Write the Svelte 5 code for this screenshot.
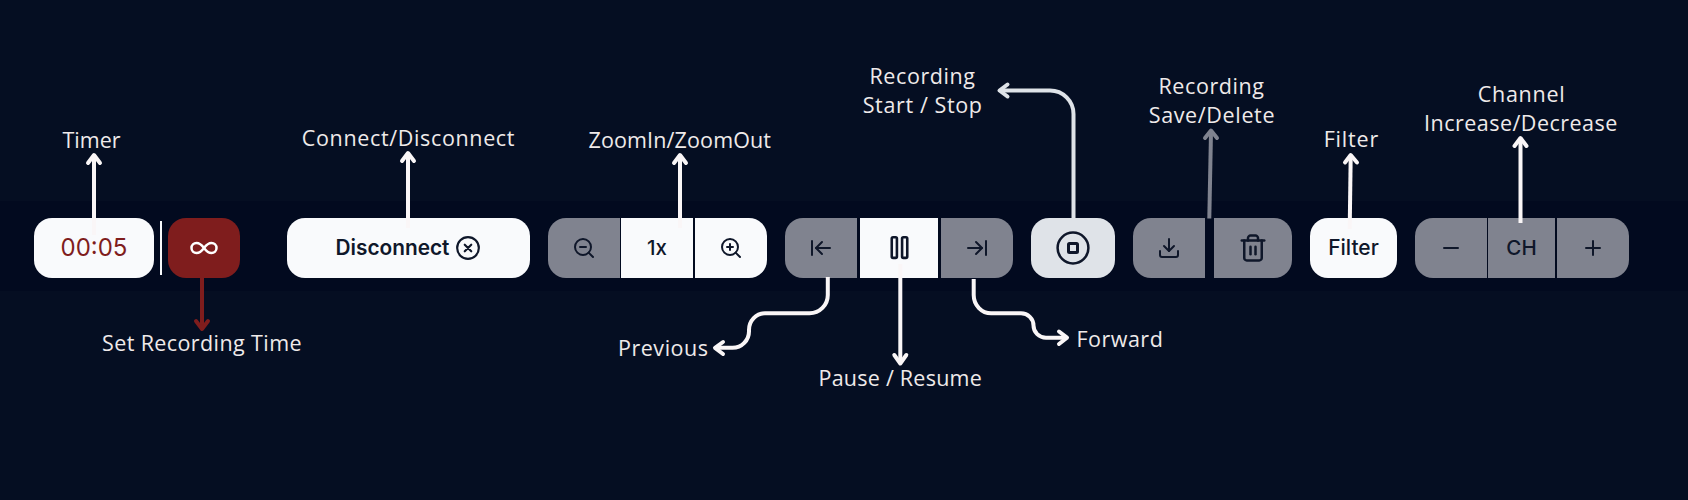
<script>
  const LIGHT = '#faf6f7';
  const labels = [
    { x: 62.5, w: 58, y: 148, t: 'Timer' },
    { x: 102, w: 199.5, y: 351, t: 'Set Recording Time' },
    { x: 301.8, w: 212.7, y: 146, t: 'Connect/Disconnect' },
    { x: 588.5, w: 182.5, y: 148, t: 'ZoomIn/ZoomOut' },
    { x: 618, w: 90, y: 355.5, t: 'Previous' },
    { x: 818.5, w: 163.3, y: 386, t: 'Pause / Resume' },
    { x: 869.5, w: 105.5, y: 84, t: 'Recording' },
    { x: 862.7, w: 119.3, y: 113, t: 'Start / Stop' },
    { x: 1076.5, w: 86.3, y: 346.5, t: 'Forward' },
    { x: 1158.5, w: 105.5, y: 94, t: 'Recording' },
    { x: 1148.7, w: 125.8, y: 123, t: 'Save/Delete' },
    { x: 1323.7, w: 54.5, y: 147, t: 'Filter' },
    { x: 1477.7, w: 87, y: 102, t: 'Channel' },
    { x: 1424, w: 193.3, y: 131, t: 'Increase/Decrease' }
  ];
  const arrows = [
    { c: LIGHT, d: 'M94 235V156', h: 'M88 163L94 155L100 163' },
    { c: '#7f1d1d', d: 'M202 278V327', h: 'M196 321L202 329L208 321' },
    { c: LIGHT, d: 'M408 228V154', h: 'M402 161L408 153L414 161' },
    { c: LIGHT, d: 'M680 228V156', h: 'M674 163L680 155L686 163' },
    { c: LIGHT, d: 'M827.8 277V295A18.3 18.3 0 0 1 809.5 313.3H765A16 16.7 0 0 0 749 330V331A16.5 16.5 0 0 1 732.5 347.8H717', h: 'M723 342L715 347.8L723 354' },
    { c: LIGHT, d: 'M900.3 264V362', h: 'M894.3 355L900.3 363.5L906.3 355' },
    { c: LIGHT, d: 'M973.7 279V295A17.5 18.3 0 0 0 991.5 313.3H1021A12.5 12.2 0 0 1 1033.5 325.5A12.5 12.2 0 0 0 1046 337.7H1066', h: 'M1059 331.5L1067 337.7L1059 344' },
    { c: '#dfe3e8', d: 'M1073.5 218V114A23.5 23.5 0 0 0 1050 90.5H1001', h: 'M1007.5 84.5L999.5 90.5L1007.5 96.5' },
    { c: '#80838f', d: 'M1209.3 218.5L1211 132', h: 'M1205 138L1211 130.5L1217 138' },
    { c: LIGHT, d: 'M1349.7 229L1350.7 156', h: 'M1345 162.5L1350.7 155L1357 162.5' },
    { c: LIGHT, d: 'M1520.5 223V139', h: 'M1514.5 146L1520.5 138L1526.5 146' }
  ];
</script>

{#snippet icon(paths, size = 24)}
  <svg class="icon" width={size} height={size} viewBox="0 0 24 24">
    {#each paths as d}<path {d} />{/each}
  </svg>
{/snippet}

<main>
  <div class="toolbar">
    <div class="timer-group">
      <button class="btn timer">00:05</button>
      <i class="divider"></i>
      <button class="btn danger">
        {@render icon(['M12 12c-2-2.67-4-4-6-4a4 4 0 1 0 0 8c2 0 4-1.33 6-4Zm0 0c2 2.67 4 4 6 4a4 4 0 0 0 0-8c-2 0-4 1.33-6 4Z'], 30)}
      </button>
    </div>
    <button class="btn connect">
      <span>Disconnect</span>
      <svg class="icon" width="26" height="26" viewBox="0 0 24 24"><circle cx="12" cy="12" r="10" /><path d="m15 9-6 6M9 9l6 6" /></svg>
    </button>
    <div class="group zoom">
      <button class="btn dim">
        <svg class="icon" width="24" height="24" viewBox="0 0 24 24"><circle cx="11" cy="11" r="8" /><path d="m21 21-4.35-4.35M8 11h6" /></svg>
      </button>
      <button class="btn">1x</button>
      <button class="btn">
        <svg class="icon" width="24" height="24" viewBox="0 0 24 24"><circle cx="11" cy="11" r="8" /><path d="m21 21-4.35-4.35M8 11h6M11 8v6" /></svg>
      </button>
    </div>
    <div class="group play">
      <button class="btn dim">{@render icon(['M3 19V5', 'm13 6-6 6 6 6', 'M7 12h14'])}</button>
      <button class="btn">
        <svg class="icon" width="31" height="31" viewBox="0 0 24 24"><rect x="6" y="4" width="4" height="16" rx="1" /><rect x="14" y="4" width="4" height="16" rx="1" /></svg>
      </button>
      <button class="btn dim">{@render icon(['M17 12H3', 'm11 18 6-6-6-6', 'M21 5v14'])}</button>
    </div>
    <button class="btn record">
      <svg class="icon" width="36" height="36" viewBox="0 0 36 36"><circle cx="18" cy="18" r="15.4" stroke-width="2.5" /><rect x="13.5" y="13.5" width="9" height="9" rx="1" stroke-width="3" /></svg>
    </button>
    <div class="group save">
      <button class="btn dim">{@render icon(['M21 15v4a2 2 0 0 1-2 2H5a2 2 0 0 1-2-2v-4', 'm7 10 5 5 5-5', 'M12 15V3'])}</button>
      <button class="btn dim">{@render icon(['M3 6h18', 'M19 6v14c0 1-1 2-2 2H7c-1 0-2-1-2-2V6', 'M8 6V4c0-1 1-2 2-2h4c1 0 2 1 2 2v2', 'M10 11v6', 'M14 11v6'], 30)}</button>
    </div>
    <button class="btn filter">Filter</button>
    <div class="group channel">
      <button class="btn dim">{@render icon(['M5 12h14'])}</button>
      <button class="btn dim">CH</button>
      <button class="btn dim">{@render icon(['M5 12h14', 'M12 5v14'])}</button>
    </div>
  </div>

  <svg class="notes" width="1688" height="500" viewBox="0 0 1688 500">
    {#each arrows as a}
      <g stroke={a.c} fill="none" stroke-width="4">
        <path d={a.d} />
        <path d={a.h} stroke-linecap="round" stroke-linejoin="round" />
      </g>
    {/each}
    {#each labels as l}
      <text x={l.x} y={l.y} textLength={l.w}>{l.t}</text>
    {/each}
  </svg>
</main>

<style>
  :global(body) { margin: 0; background: #050e22; }
  main {
    position: relative;
    width: 1688px;
    height: 500px;
    box-sizing: border-box;
    padding-top: 201px;
    overflow: hidden;
    background: #050e22;
  }
  .toolbar {
    display: flex;
    align-items: center;
    gap: 18px;
    height: 90px;
    padding: 4px 34px 0;
    box-sizing: border-box;
    background: #020a1f;
  }
  .timer-group { display: flex; align-items: center; gap: 6px; margin-right: 29px; }
  .divider { width: 2px; height: 54px; background: #f8fafc; }
  .btn {
    display: flex;
    align-items: center;
    justify-content: center;
    flex: none;
    width: 72px;
    height: 60px;
    padding: 0 0 1px;
    box-sizing: border-box;
    border: 0;
    border-radius: 18px;
    background: #f9fafc;
    color: #0f172a;
    font: 500 21px Inter, sans-serif;
  }
  .dim { background: #80838f; }
  .timer { width: 120px; color: #7f1d1d; font-size: 24px; font-weight: 400; }
  .danger { background: #7f1d1d; color: #fff; }
  .connect { width: 243px; gap: 6px; font-weight: 600; font-size: 20.8px; }
  .record { width: 84px; background: #dfe3e8; }
  .filter { width: 87px; }
  .group { display: flex; }
  .group .btn { border-radius: 0; }
  .group .btn:first-child { border-radius: 18px 0 0 18px; }
  .group .btn:last-child { border-radius: 0 18px 18px 0; }
  .zoom .btn:nth-child(2) { margin: 0 2px 0 1px; font-size: 20.5px; }
  .play { gap: 3px; }
  .play .btn:nth-child(2) { width: 78px; }
  .save { gap: 9px; }
  .save .btn:last-child { width: 78px; }
  .channel .btn:nth-child(2) { width: 67px; margin: 0 2px 0 1px; font-size: 20.5px; }
  .icon {
    display: block;
    flex: none;
    fill: none;
    stroke: currentColor;
    stroke-width: 2;
    stroke-linecap: round;
    stroke-linejoin: round;
  }
  .notes { position: absolute; inset: 0; pointer-events: none; }
  text { font: 400 21.5px "Open Sans", sans-serif; fill: #efeaea; }
</style>
